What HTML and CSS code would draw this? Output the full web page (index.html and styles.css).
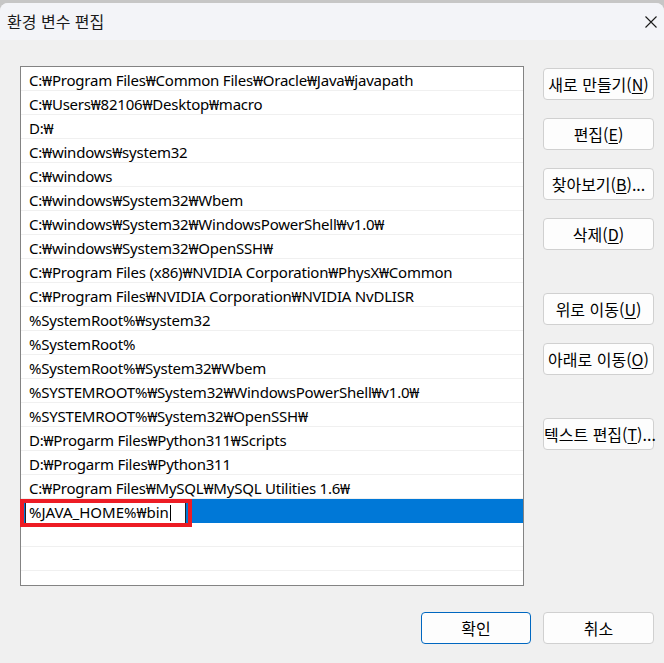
FILE: index.html
```html
<!DOCTYPE html>
<html lang="ko">
<head>
    <meta charset="UTF-8">
    <title>환경 변수 편집</title>
    <link rel="stylesheet" href="styles.css">
</head>
<body>
    <div class="window">
        <!-- Title Bar -->
        <div class="title-bar">
            <span class="title">환경 변수 편집</span>
            <svg class="close" width="12" height="12" viewBox="0 0 12 12">
                <path d="M0.5 0.5 L11.5 11.5 M11.5 0.5 L0.5 11.5" stroke="#1a1a1a" stroke-width="1.1" fill="none"/>
            </svg>
        </div>

        <div class="dialog-body">
            <div class="top-row">
                <!-- Path List -->
                <div class="path-list">
                    <div class="row">C:₩Program Files₩Common Files₩Oracle₩Java₩javapath</div>
                    <div class="row">C:₩Users₩82106₩Desktop₩macro</div>
                    <div class="row">D:₩</div>
                    <div class="row">C:₩windows₩system32</div>
                    <div class="row">C:₩windows</div>
                    <div class="row">C:₩windows₩System32₩Wbem</div>
                    <div class="row">C:₩windows₩System32₩WindowsPowerShell₩v1.0₩</div>
                    <div class="row">C:₩windows₩System32₩OpenSSH₩</div>
                    <div class="row">C:₩Program Files (x86)₩NVIDIA Corporation₩PhysX₩Common</div>
                    <div class="row">C:₩Program Files₩NVIDIA Corporation₩NVIDIA NvDLISR</div>
                    <div class="row">%SystemRoot%₩system32</div>
                    <div class="row">%SystemRoot%</div>
                    <div class="row">%SystemRoot%₩System32₩Wbem</div>
                    <div class="row">%SYSTEMROOT%₩System32₩WindowsPowerShell₩v1.0₩</div>
                    <div class="row">%SYSTEMROOT%₩System32₩OpenSSH₩</div>
                    <div class="row">D:₩Progarm Files₩Python311₩Scripts</div>
                    <div class="row">D:₩Progarm Files₩Python311</div>
                    <div class="row">C:₩Program Files₩MySQL₩MySQL Utilities 1.6₩</div>
                    <div class="row selected">
                        <div class="edit-box">%JAVA_HOME%₩bin<span class="caret"></span></div>
                        <div class="highlight"></div>
                    </div>
                    <div class="row"></div>
                    <div class="row"></div>
                </div>

                <!-- Side Buttons -->
                <div class="side-buttons">
                    <button class="btn">새로 만들기(<u>N</u>)</button>
                    <button class="btn">편집(<u>E</u>)</button>
                    <button class="btn">찾아보기(<u>B</u>)...</button>
                    <button class="btn">삭제(<u>D</u>)</button>
                    <div class="spacer"></div>
                    <button class="btn">위로 이동(<u>U</u>)</button>
                    <button class="btn">아래로 이동(<u>O</u>)</button>
                    <div class="spacer"></div>
                    <button class="btn">텍스트 편집(<u>T</u>)...</button>
                </div>
            </div>

            <!-- Bottom Buttons -->
            <div class="bottom-buttons">
                <button class="btn btn-default">확인</button>
                <button class="btn">취소</button>
            </div>
        </div>
    </div>
</body>
</html>
```

FILE: styles.css
```css
/* General Reset */
* {
    box-sizing: border-box;
    margin: 0;
    padding: 0;
}

body {
    background: #c6c6c6;
    font-family: "Noto Sans", "Noto Sans CJK KR", sans-serif;
    font-size: 15px;
    color: #000;
    overflow: hidden;
}

/* Dialog Window */
.window {
    margin-top: 3px;
    height: 660px;
    background: #f0f0f0;
    border-radius: 8px 8px 0 0;
    overflow: hidden;
}

/* Title Bar */
.title-bar {
    height: 37px;
    background: #f3f4f8;
    display: flex;
    align-items: center;
    justify-content: space-between;
    padding: 0 7px 0 7px;
}

.title {
    font-family: "Noto Sans CJK KR", sans-serif;
    font-size: 16px;
    color: #1a1a1a;
    margin-top: -1px;
}

/* Body Layout */
.dialog-body {
    padding: 26px 10px 0 20px;
}

.top-row {
    display: flex;
    gap: 19px;
}

/* Path List */
.path-list {
    width: 504px;
    height: 520px;
    border: 1px solid #838383;
    background: #fff;
    position: relative;
}

.row {
    height: 24px;
    padding: 3px 0 0 8px;
    line-height: 20px;
    letter-spacing: -0.22px;
    border-bottom: 1px solid #f0f0f0;
    white-space: nowrap;
    position: relative;
}

.row.selected {
    background: #0078d7;
    border-bottom-color: #0078d7;
}

/* Inline Edit Box */
.edit-box {
    position: absolute;
    left: 4px;
    top: 2px;
    width: 161px;
    height: 22px;
    background: #fff;
    border-left: 1px solid #222;
    border-right: 1px solid #222;
    padding: 1px 0 0 3px;
    line-height: 20px;
    letter-spacing: 0;
}

.caret {
    display: inline-block;
    width: 1px;
    height: 16px;
    background: #000;
    vertical-align: -3px;
    margin-left: 1px;
}

/* Red annotation box */
.highlight {
    position: absolute;
    left: -1px;
    top: 0;
    width: 172px;
    height: 28px;
    border: 4px solid #ed1c24;
}

/* Side Buttons */
.side-buttons {
    width: 111px;
    padding-top: 2px;
    display: flex;
    flex-direction: column;
    gap: 18px;
}

.spacer {
    height: 7px;
}

.btn {
    height: 32px;
    width: 111px;
    background: #fdfdfd;
    border: 1px solid #d0d0d0;
    border-radius: 4px;
    font-family: "Noto Sans CJK KR", sans-serif;
    font-size: 16px;
    color: #000;
    white-space: nowrap;
    padding: 0;
}

.btn u {
    text-underline-offset: 2px;
}

/* Bottom Buttons */
.bottom-buttons {
    display: flex;
    justify-content: flex-end;
    gap: 12px;
    margin-top: 26px;
}

.btn-default {
    width: 110px;
    border-color: #0067c0;
}
```
